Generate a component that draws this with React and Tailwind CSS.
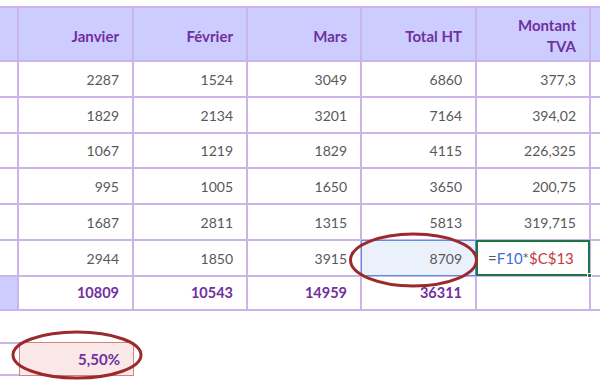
const widths = ['w-[19px]', 'w-[115px]', 'w-[114px]', 'w-[114px]', 'w-[115px]', 'w-[114px]']

const rows = [
    ['2287', '1524', '3049', '6860', '377,3'],
    ['1829', '2134', '3201', '7164', '394,02'],
    ['1067', '1219', '1829', '4115', '226,325'],
    ['995', '1005', '1650', '3650', '200,75'],
    ['1687', '2811', '1315', '5813', '319,715'],
]
const heights = ['h-[36px]', 'h-[36px]', 'h-[35px]', 'h-[36px]', 'h-[36px]']

const line = 'border-[#cbb4e7]'

function Cell({ i, children, className = '' }) {
    return (
        <div
            className={`${widths[i]} shrink-0 border-r-2 border-b-2 ${line} flex items-center justify-end pr-[13px] ${className}`}
        >
            {children}
        </div>
    )
}

export default function App() {
    return (
        <div
            className="relative w-[600px] h-[385px] bg-white overflow-hidden pt-[6px]"
            style={{ fontFamily: 'Lato, "Open Sans", sans-serif' }}
        >
            {/* header */}
            <div className={`flex h-[56px] border-t-2 ${line} bg-[#ccccff] text-[#7030a0] font-bold text-[15px] leading-[21px]`}>
                <Cell i={0} />
                <Cell i={1} className="pt-[5px]">Janvier</Cell>
                <Cell i={2} className="pt-[5px]">Février</Cell>
                <Cell i={3} className="pt-[5px]">Mars</Cell>
                <Cell i={4} className="pt-[5px]">Total HT</Cell>
                <Cell i={5} className="text-right pt-[4px]">
                    Montant
                    <br />
                    TVA
                </Cell>
                <div className={`flex-1 border-b-2 ${line}`} />
            </div>

            {/* body */}
            {rows.map((r, k) => (
                <div key={k} className={`flex ${heights[k]} text-[#595959] text-[14px]`}>
                    <Cell i={0} />
                    {r.map((v, j) => (
                        <Cell key={j} i={j + 1}>
                            {v}
                        </Cell>
                    ))}
                    <div className={`flex-1 border-b-2 ${line}`} />
                </div>
            ))}

            {/* row with the formula */}
            <div className="flex h-[36px] text-[#595959] text-[14px]">
                <Cell i={0} />
                <Cell i={1}>2944</Cell>
                <Cell i={2}>1850</Cell>
                <Cell i={3}>3915</Cell>
                <Cell i={4} className="relative bg-[#eaf1fa]">
                    <span className="relative">8709</span>
                    <div className="absolute -left-[1px] -top-[1px] -right-[1px] -bottom-[1px] border border-[#5b8de3]" />
                </Cell>
                <Cell i={5} className="relative !justify-start pl-[11px]">
                    <span className="relative text-[15px]">
                        <span className="text-[#595959]">=</span>
                        <span className="text-[#3d6fd6]">F10</span>
                        <span className="text-[#595959]">*</span>
                        <span className="text-[#c5393b]">$C$13</span>
                    </span>
                    <div className="absolute -left-[1px] -top-[1px] -right-[1px] -bottom-[1px] border-2 border-[#217346]" />
                    <div className="absolute -right-[3px] -bottom-[3px] w-[5px] h-[5px] bg-[#217346] border border-white" />
                </Cell>
                <div className={`flex-1 border-b-2 ${line}`} />
            </div>

            {/* totals */}
            <div className="flex h-[34px] text-[#7030a0] font-bold text-[14.5px]">
                <Cell i={0} className="bg-[#ccccff]" />
                <Cell i={1}>10809</Cell>
                <Cell i={2}>10543</Cell>
                <Cell i={3}>14959</Cell>
                <Cell i={4}>36311</Cell>
                <Cell i={5} />
                <div className={`flex-1 border-b-2 ${line}`} />
            </div>

            {/* rate */}
            <div className="flex mt-[31px] h-[34px] text-[#7030a0] font-bold text-[15px]">
                <div className={`w-[19px] shrink-0 border-t-2 border-b-2 ${line}`} />
                <div className="w-[115px] shrink-0 relative bg-[#fbe8e8] border border-[#d48080] flex items-center justify-end pr-[13px]">
                    5,50%
                </div>
            </div>

            {/* hand drawn circles */}
            <svg className="absolute left-0 top-0 pointer-events-none" width="600" height="385">
                <ellipse cx="413.5" cy="260" rx="63" ry="26" fill="none" stroke="#9c2a2c" strokeWidth="3" />
                <ellipse cx="77" cy="355" rx="64" ry="23" fill="none" stroke="#9c2a2c" strokeWidth="3" />
            </svg>
        </div>
    )
}
